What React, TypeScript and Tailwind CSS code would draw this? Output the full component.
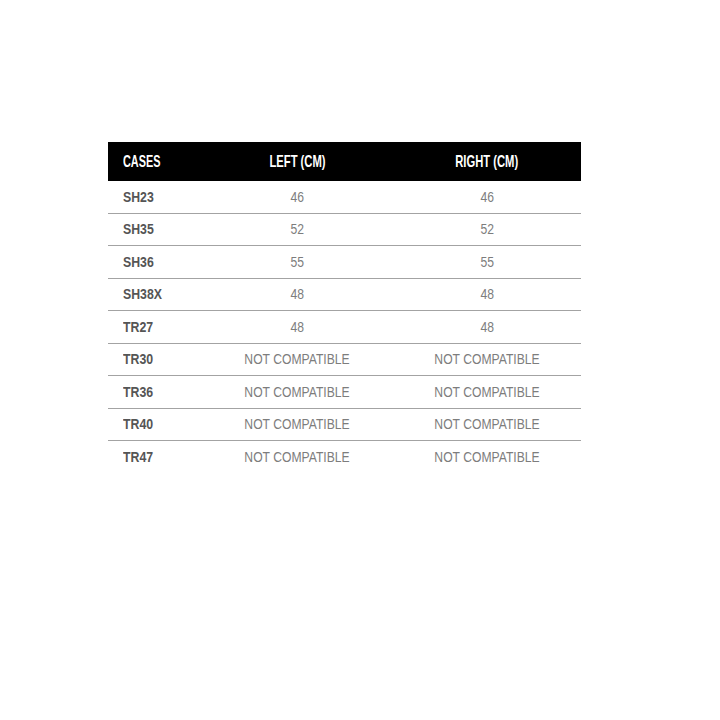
const rows: [string, string, string][] = [
  ["SH23", "46", "46"],
  ["SH35", "52", "52"],
  ["SH36", "55", "55"],
  ["SH38X", "48", "48"],
  ["TR27", "48", "48"],
  ["TR30", "NOT COMPATIBLE", "NOT COMPATIBLE"],
  ["TR36", "NOT COMPATIBLE", "NOT COMPATIBLE"],
  ["TR40", "NOT COMPATIBLE", "NOT COMPATIBLE"],
  ["TR47", "NOT COMPATIBLE", "NOT COMPATIBLE"],
];

export default function App() {
  return (
    <div className="w-[720px] h-[720px] bg-white pt-[142px] pl-[108px] font-['Liberation_Sans',Arial,sans-serif]">
      <div className="w-[473px]">
        <div className="flex h-[39px] items-center bg-black text-white font-bold text-[17px] leading-none">
          <div className="w-[93px] pl-[15px]">
            <span className="inline-block origin-left scale-x-[0.64]">CASES</span>
          </div>
          <div className="w-[192px] text-center">
            <span className="inline-block scale-x-[0.66]">LEFT (CM)</span>
          </div>
          <div className="flex-1 text-center">
            <span className="inline-block scale-x-[0.66]">RIGHT (CM)</span>
          </div>
        </div>
        {rows.map(([name, left, right], i) => (
          <div
            key={name}
            className={
              "flex h-[32.5px] items-center text-[15px] leading-none pb-[1px] " +
              (i < rows.length - 1 ? "border-b border-[#a3a3a3]" : "")
            }
          >
            <div className="w-[93px] pl-[15px] font-bold text-[#555]">
              <span className="inline-block origin-left scale-x-[0.82]">{name}</span>
            </div>
            <div className="w-[192px] text-center text-[#7d7d7d]">
              <span className="inline-block scale-x-[0.81]">{left}</span>
            </div>
            <div className="flex-1 text-center text-[#7d7d7d]">
              <span className="inline-block scale-x-[0.81]">{right}</span>
            </div>
          </div>
        ))}
      </div>
    </div>
  );
}
